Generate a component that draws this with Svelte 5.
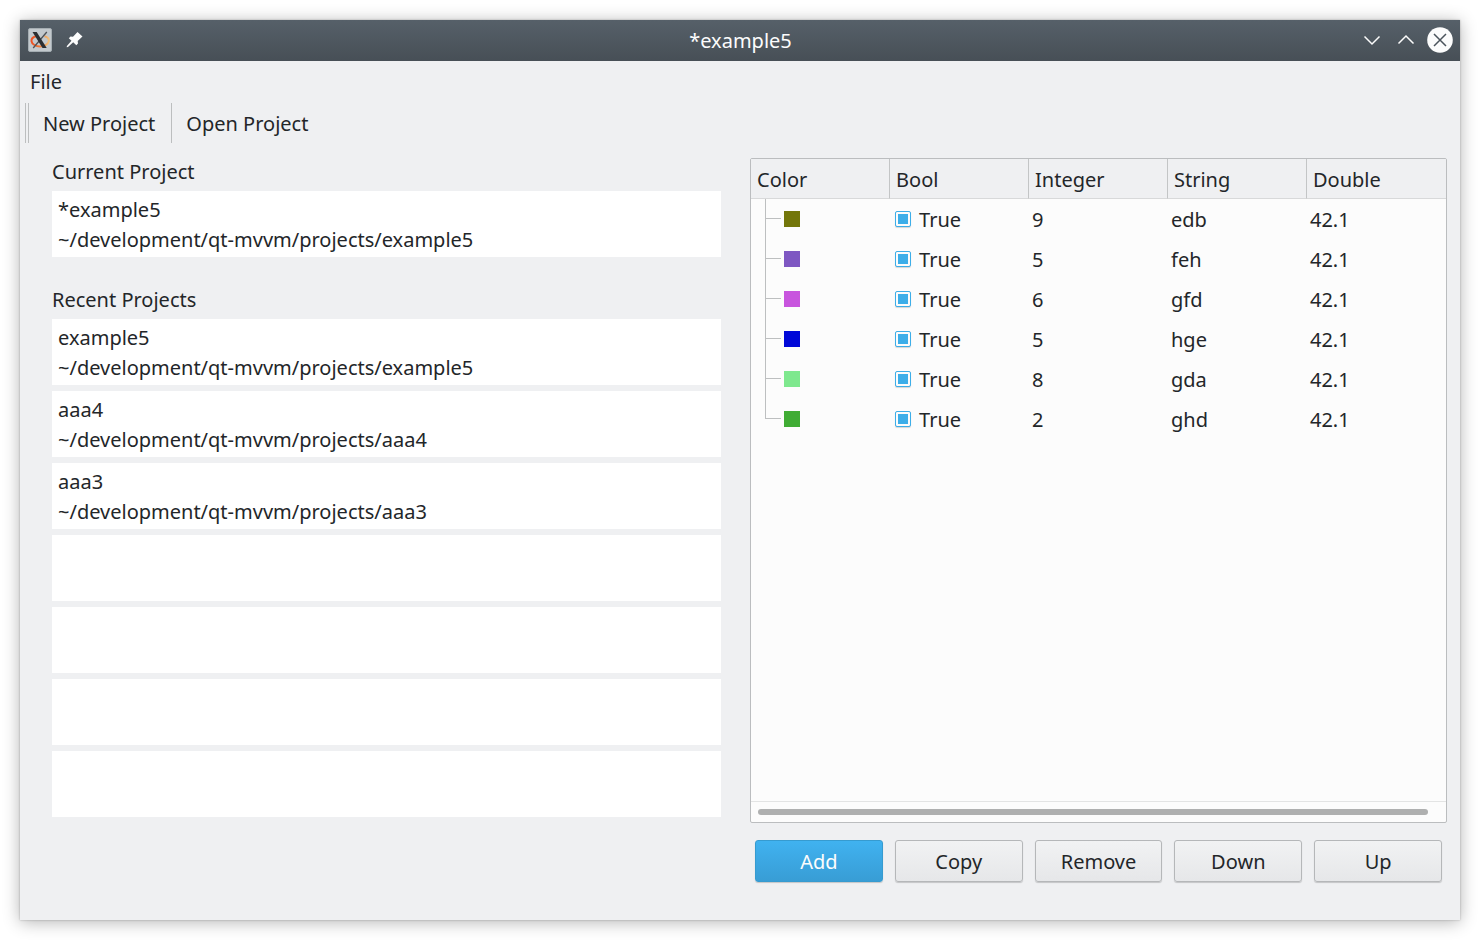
<!--
  Project manager window: recent projects on the left, item table on the right.
-->
<script lang="ts">
  type Project = { name: string; path: string };
  type Item = { color: string; flag: boolean; integer: number; text: string; double: number };

  const SLOT_COUNT = 7;
  const columns = ['Color', 'Bool', 'Integer', 'String', 'Double'];
  const actions = ['Add', 'Copy', 'Remove', 'Down', 'Up'];

  const current: Project = { name: '*example5', path: '~/development/qt-mvvm/projects/example5' };

  const recent: Project[] = [
    { name: 'example5', path: '~/development/qt-mvvm/projects/example5' },
    { name: 'aaa4', path: '~/development/qt-mvvm/projects/aaa4' },
    { name: 'aaa3', path: '~/development/qt-mvvm/projects/aaa3' },
  ];

  // Unused slots stay visible as blank cards.
  const slots = Array.from({ length: SLOT_COUNT }, (_, i) => recent[i] ?? null);

  let items: Item[] = $state([
    { color: '#73760a', flag: true, integer: 9, text: 'edb', double: 42.1 },
    { color: '#7e57c2', flag: true, integer: 5, text: 'feh', double: 42.1 },
    { color: '#c855de', flag: true, integer: 6, text: 'gfd', double: 42.1 },
    { color: '#0008d8', flag: true, integer: 5, text: 'hge', double: 42.1 },
    { color: '#7ee88e', flag: true, integer: 8, text: 'gda', double: 42.1 },
    { color: '#40ac34', flag: true, integer: 2, text: 'ghd', double: 42.1 },
  ]);
</script>

<div class="window">
  <header class="titlebar">
    <div class="title-icons">
      <svg viewBox="0 0 24 24" width="24" height="24" aria-hidden="true">
        <defs>
          <linearGradient id="ring" x1="0" x2="1" y1="0" y2="0">
            <stop offset="0" stop-color="#ee4f22" />
            <stop offset="0.5" stop-color="#f07a35" />
            <stop offset="1" stop-color="#f2c27c" />
          </linearGradient>
        </defs>
        <rect x="0.5" y="0.5" width="23" height="23" rx="1.5" fill="#c3c9cd" stroke="#a5adb2" />
        <path d="M8.500 8.300C5 9 3.300 11 3.500 13.200c.4 3.200 4.500 5.200 8.500 5.200 4.500 0 8.500-2.200 8.900-5.200.3-2.200-1.400-4.200-4.400-4.900" fill="none" stroke="url(#ring)" stroke-width="2" />
        <path d="M18.800 4L5.200 20" stroke="#4d5257" stroke-width="1.300" />
        <path d="M4.500 4h4.200l10 16h-4.200z" fill="#2b2e31" />
      </svg>
      <button class="pin" aria-label="Pin window">
        <svg viewBox="0 0 18 18" width="18" height="18" aria-hidden="true">
          <path d="M11.500 1l5 4.500-4.800 4.500.3 2.500-1.700 1.700-3.100-3L2 16 .7 16.200.9 15 5.500 9.800 2.800 7.200 4.500 5.600l2.500.2z" fill="#fcfcfc" />
        </svg>
      </button>
    </div>
    <h1>*example5</h1>
    <div class="title-controls">
      <button aria-label="Minimize">
        <svg viewBox="0 0 26 26" width="26" height="26" aria-hidden="true">
          <path d="M5.500 9.500l7.500 7.500 7.500-7.500" />
        </svg>
      </button>
      <button aria-label="Maximize">
        <svg viewBox="0 0 26 26" width="26" height="26" aria-hidden="true">
          <path d="M5.500 16.500L13 9l7.500 7.500" />
        </svg>
      </button>
      <button aria-label="Close">
        <svg viewBox="0 0 26 26" width="26" height="26" aria-hidden="true">
          <circle cx="13" cy="13" r="12.800" />
          <path class="cross" d="M7 7l12 12M19 7L7 19" />
        </svg>
      </button>
    </div>
  </header>

  <nav class="menubar" aria-label="Menu">
    <button>File</button>
  </nav>

  <div class="toolbar" role="toolbar" aria-label="Project">
    <span class="handle"></span>
    <button>New Project</button>
    <span class="separator"></span>
    <button>Open Project</button>
  </div>

  <main>
    <section class="projects">
      <h2>Current Project</h2>
      <div class="card">
        <span>{current.name}</span>
        <span>{current.path}</span>
      </div>

      <h2 class="recent-title">Recent Projects</h2>
      <div class="recent">
        {#each slots as project}
          {#if project}
            <button class="card">
              <span>{project.name}</span>
              <span>{project.path}</span>
            </button>
          {:else}
            <div class="card"></div>
          {/if}
        {/each}
      </div>
    </section>

    <section class="editor">
      <div class="tree">
        <table>
          <thead>
            <tr>
              {#each columns as column}
                <th scope="col">{column}</th>
              {/each}
            </tr>
          </thead>
          <tbody>
            {#each items as item}
              <tr>
                <td class="branch">
                  <span class="swatch" style="background: {item.color}"></span>
                </td>
                <td class="check">
                  <label>
                    <input type="checkbox" bind:checked={item.flag} />
                    <span>{item.flag ? 'True' : 'False'}</span>
                  </label>
                </td>
                <td>{item.integer}</td>
                <td>{item.text}</td>
                <td>{item.double}</td>
              </tr>
            {/each}
          </tbody>
        </table>
        <div class="scrollbar"><div class="thumb"></div></div>
      </div>

      <div class="actions">
        {#each actions as action, i}
          <button class:primary={i === 0}>{action}</button>
        {/each}
      </div>
    </section>
  </main>
</div>

<style>
  :global(body) {
    background: #fff;
  }

  .window {
    display: flex;
    flex-direction: column;
    box-sizing: border-box;
    min-height: calc(100vh - 40px);
    margin: 20px;
    background: #eff0f2;
    color: #232629;
    font-family: 'Noto Sans', sans-serif;
    font-size: 20px;
    line-height: 30px;
    box-shadow:
      0 0 2px rgba(0, 0, 0, 0.25),
      0 2px 16px rgba(0, 0, 0, 0.3);
  }

  button {
    margin: 0;
    padding: 0;
    border: 0;
    background: none;
    color: inherit;
    font: inherit;
  }

  h1,
  h2 {
    margin: 0;
    font-size: inherit;
    font-weight: 400;
  }

  svg {
    display: block;
  }

  .titlebar {
    display: grid;
    grid-template-columns: 1fr auto 1fr;
    align-items: center;
    height: 41px;
    padding: 0 7px 1px 8px;
    box-sizing: border-box;
    background: linear-gradient(#566069, #474f56);
    color: #fcfcfc;
  }

  h1 {
    padding-top: 2px;
  }

  .title-icons {
    display: flex;
    align-items: center;
    gap: 14px;
  }

  .title-controls {
    display: flex;
    justify-content: flex-end;
    gap: 8px;
  }

  .title-controls path {
    fill: none;
    stroke: #fcfcfc;
    stroke-width: 1.5;
  }

  .title-controls circle {
    fill: #fcfcfc;
  }

  .title-controls .cross {
    stroke: #4b545c;
  }

  .menubar {
    display: flex;
    align-items: center;
    height: 42px;
    padding: 0 10px;
  }

  .toolbar {
    display: flex;
    height: 40px;
    padding-left: 5px;
  }

  .toolbar button {
    padding: 2px 16px 0 14px;
  }

  .handle {
    width: 2px;
    border: solid #bcbebf;
    border-width: 0 1px;
  }

  .separator {
    width: 1px;
    background: #bcbebf;
  }

  main {
    display: grid;
    flex: 1;
    grid-template-columns: 24fr 25fr;
    gap: 29px;
    padding: 14px 13px 38px 32px;
  }

  h2 {
    margin-bottom: 4px;
  }

  .recent-title {
    margin-top: 28px;
  }

  .recent {
    display: flex;
    flex-direction: column;
    gap: 6px;
  }

  .card {
    display: flex;
    flex-direction: column;
    align-items: flex-start;
    box-sizing: border-box;
    min-height: 66px;
    padding: 4px 6px 2px;
    background: #fff;
  }

  .editor {
    display: flex;
    flex-direction: column;
    gap: 17px;
    min-width: 0;
    padding-top: 1px;
  }

  .tree {
    display: flex;
    flex: 1;
    flex-direction: column;
    overflow: hidden;
    border: 1px solid #bbbdbf;
    border-radius: 2px;
    background: #fcfcfc;
  }

  table {
    width: 100%;
    table-layout: fixed;
    border-collapse: separate;
    border-spacing: 0;
  }

  th,
  td {
    box-sizing: border-box;
    height: 40px;
    text-align: left;
    font-weight: 400;
  }

  th {
    padding: 2px 6px 0;
    border-right: 1px solid #c3c5c6;
    border-bottom: 1px solid #d8d9da;
    background: #eff0f2;
  }

  th:last-child {
    border-right: 0;
  }

  td {
    padding: 1px 3px 0;
  }

  .check {
    padding: 0 5px;
  }

  .branch {
    position: relative;
    padding: 0 0 0 33px;
  }

  /* Tree guides: a trunk down the column and a twig to each swatch. */
  .branch::before,
  .branch::after {
    content: '';
    position: absolute;
    left: 14px;
    background: #bdbfc0;
  }

  .branch::before {
    top: 0;
    width: 1px;
    height: 40px;
  }

  .branch::after {
    top: 19px;
    width: 16px;
    height: 1px;
  }

  tr:last-child .branch::before {
    height: 20px;
  }

  .swatch {
    display: block;
    width: 16px;
    height: 16px;
  }

  label {
    display: flex;
    align-items: center;
    gap: 8px;
  }

  label span {
    padding-top: 2px;
  }

  input {
    appearance: none;
    box-sizing: border-box;
    width: 16px;
    height: 16px;
    margin: 0;
    padding: 2px;
    border: 1px solid #3daee9;
    border-radius: 2px;
    background: #fcfcfc;
    box-shadow: 0 1px 1px rgba(0, 0, 0, 0.15);
  }

  input:checked {
    background: #3daee9 content-box;
  }

  .scrollbar {
    margin-top: auto;
    padding: 7px 18px 7px 7px;
    border-top: 1px solid #e3e4e4;
  }

  .thumb {
    height: 6px;
    border-radius: 3px;
    background: #afb0b0;
  }

  .actions {
    display: grid;
    grid-template-columns: repeat(5, 1fr);
    gap: 12px;
    padding: 0 5px;
  }

  .actions button {
    height: 42px;
    padding-top: 2px;
    border: 1px solid #b5b7b9;
    border-radius: 3px;
    background: linear-gradient(#f1f2f3, #e6e7e9);
    box-shadow: 0 1px 1px rgba(0, 0, 0, 0.18);
  }

  .actions .primary {
    border-color: #369bd0;
    background: linear-gradient(#40b2f0, #389dd5);
    color: #fcfcfc;
  }
</style>
